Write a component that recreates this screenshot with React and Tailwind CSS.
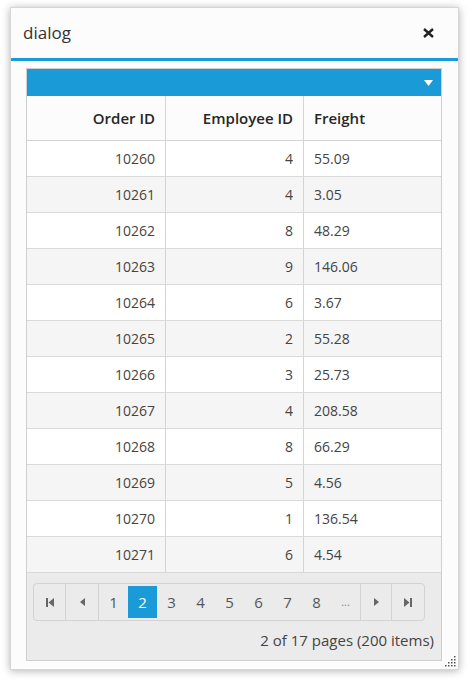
import React from 'react';

const rows = [
    [10260, 4, '55.09'],
    [10261, 4, '3.05'],
    [10262, 8, '48.29'],
    [10263, 9, '146.06'],
    [10264, 6, '3.67'],
    [10265, 2, '55.28'],
    [10266, 3, '25.73'],
    [10267, 4, '208.58'],
    [10268, 8, '66.29'],
    [10269, 5, '4.56'],
    [10270, 1, '136.54'],
    [10271, 6, '4.54'],
];

const pages = ['1', '2', '3', '4', '5', '6', '7', '8', '...'];

const Tri = ({ dir = 'left' }) => (
    <svg width="5" height="8" viewBox="0 0 5 8" className="fill-[#666]">
        {dir === 'left' ? <path d="M5 0V8L0 4Z" /> : <path d="M0 0V8L5 4Z" />}
    </svg>
);

const Edge = ({ dir = 'first' }) => (
    <svg width="8" height="9" viewBox="0 0 8 9" className="fill-[#666]">
        {dir === 'first' ? (
            <>
                <rect x="0" y="0" width="2" height="9" />
                <path d="M8 0V9L2.5 4.5Z" />
            </>
        ) : (
            <>
                <path d="M0 0V9L5.5 4.5Z" />
                <rect x="6" y="0" width="2" height="9" />
            </>
        )}
    </svg>
);

const App = () => {
    return (
        <div className="w-[472px] h-[680px] bg-white pt-[7px] pl-[10px] font-['Open_Sans',sans-serif] text-[#333]">
            {/* Dialog */}
            <div className="w-[449px] h-[663px] bg-[#fcfcfc] border border-[#d6d6d6] shadow-[0_1px_8px_rgba(0,0,0,0.3)] relative flex flex-col">
                <div className="h-[53px] shrink-0 flex items-center justify-between pl-[12px] pr-[24px] border-b-[3px] border-[#1a9bd7]">
                    <span className="text-[17px] text-[#333] leading-none pb-[2px]">dialog</span>
                    <svg width="11" height="10" viewBox="0 0 11 10" className="stroke-[#222]" strokeWidth="2.4">
                        <path d="M1 1L10 9M10 1L1 9" />
                    </svg>
                </div>

                {/* Grid */}
                <div className="ml-[15px] mt-[7px] w-[416px] border border-[#cfcfcf] bg-white flex flex-col">
                    <div className="h-[27px] bg-[#1a9bd7] flex items-center justify-end pr-[8px]">
                        <svg width="9" height="6" viewBox="0 0 9 6" className="fill-white">
                            <path d="M0 0H9L4.5 6Z" />
                        </svg>
                    </div>
                    <div className="grid grid-cols-[139px_138px_1fr] h-[45px] bg-[#fcfcfc] border-b border-[#d4d4d4] text-[15px] font-semibold text-[#262626]">
                        <div className="flex items-center justify-end pr-[10px] border-r border-[#d4d4d4]">Order ID</div>
                        <div className="flex items-center justify-end pr-[10px] border-r border-[#d4d4d4]">Employee ID</div>
                        <div className="flex items-center pl-[10px]">Freight</div>
                    </div>
                    {rows.map(([id, emp, fr], i) => (
                        <div
                            key={id}
                            className={`grid grid-cols-[139px_138px_1fr] h-[36px] text-[14px] text-[#444] border-b border-[#d9d9d9] ${i % 2 ? 'bg-[#f5f5f5]' : 'bg-white'}`}
                        >
                            <div className="flex items-center justify-end pr-[10px] border-r border-[#d4d4d4]">{id}</div>
                            <div className="flex items-center justify-end pr-[10px] border-r border-[#d4d4d4]">{emp}</div>
                            <div className="flex items-center pl-[10px]">{fr}</div>
                        </div>
                    ))}

                    {/* Pager */}
                    <div className="bg-[#ebebeb] h-[87px] pt-[10px] px-[6px]">
                        <div className="inline-flex h-[38px] border border-[#d3d3d3] rounded-[4px] text-[15px] text-[#555]">
                            <div className="w-[32px] flex items-center justify-center border-r border-[#d3d3d3]"><Edge dir="first" /></div>
                            <div className="w-[33px] flex items-center justify-center border-r border-[#d3d3d3]"><Tri dir="left" /></div>
                            {pages.map((p) => (
                                <div key={p} className="w-[29px] flex items-center justify-center py-[2px]">
                                    <div
                                        className={`w-full h-full flex items-center justify-center ${p === '2' ? 'bg-[#1a9bd7] text-white' : ''} ${p === '...' ? 'text-[11px] text-[#888]' : ''}`}
                                    >
                                        {p}
                                    </div>
                                </div>
                            ))}
                            <div className="w-[32px] flex items-center justify-center border-l border-r border-[#d3d3d3]"><Tri dir="right" /></div>
                            <div className="w-[32px] flex items-center justify-center"><Edge dir="last" /></div>
                        </div>
                        <div className="text-right pr-[1px] mt-[8px] text-[15px] text-[#444]">2 of 17 pages (200 items)</div>
                    </div>
                </div>

                {/* resize grip */}
                <svg width="12" height="12" viewBox="0 0 12 12" className="absolute right-[2px] bottom-[2px] fill-[#555]">
                    <rect x="10" y="1" width="1.5" height="1.5" />
                    <rect x="7" y="4" width="1.5" height="1.5" />
                    <rect x="10" y="4" width="1.5" height="1.5" />
                    <rect x="4" y="7" width="1.5" height="1.5" />
                    <rect x="7" y="7" width="1.5" height="1.5" />
                    <rect x="10" y="7" width="1.5" height="1.5" />
                    <rect x="1" y="10" width="1.5" height="1.5" />
                    <rect x="4" y="10" width="1.5" height="1.5" />
                    <rect x="7" y="10" width="1.5" height="1.5" />
                    <rect x="10" y="10" width="1.5" height="1.5" />
                </svg>
            </div>
        </div>
    );
};

export default App;
